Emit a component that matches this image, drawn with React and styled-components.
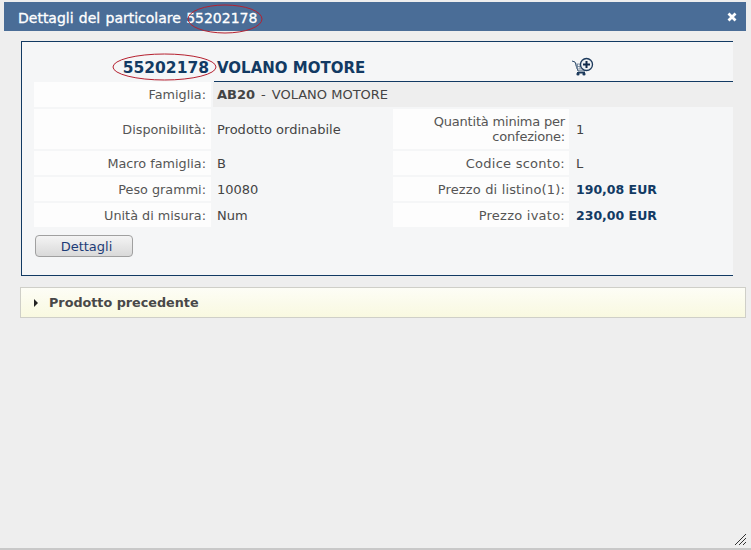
import React from "react";
import styled, { createGlobalStyle } from "styled-components";

const Global = createGlobalStyle`
  html, body { margin: 0; padding: 0; background: #ececec; }
  body { font-family: "DejaVu Sans", Verdana, sans-serif; }
`;

const Page = styled.div`
  position: relative;
  width: 751px;
  height: 550px;
  overflow: hidden;
  box-sizing: border-box;
  padding: 2px 5px 3px 4px;
  background: #eeeeee;
  border-bottom: 2px solid #c8c8c8;
`;
const TitleBar = styled.div`
  height: 29px;
  display: flex;
  align-items: center;
  justify-content: space-between;
  padding: 0 9px 0 14px;
  background: #4a6d97;
  color: #fff;
  font-size: 14px;
`;
const TitleText = styled.span`
  font-weight: 400;
  word-spacing: 0.8px;
  -webkit-text-stroke: 0.3px #fff;
  margin-top: 2px;
`;
const Body = styled.div`
  padding: 10px 0 0 17px;
  display: flex;
  flex-direction: column;
`;
const Card = styled.div`
  width: 712px;
  height: 235px;
  box-sizing: border-box;
  border: 1px solid #123a63;
  border-right: 0;
  background: #f5f6f7;
  padding: 11px 0 0 12px;
`;
const Heading = styled.div`
  display: grid;
  grid-template-columns: 180px 1fr;
  height: 29px;
  box-sizing: border-box;
`;
const Code = styled.div`
  font-size: 15.5px;
  font-weight: bold;
  color: #123a63;
  text-align: right;
  line-height: 31px;
  padding-right: 5px;
`;
const NameLine = styled.div`
  display: flex;
  align-items: center;
  border-bottom: 1px solid #123a63;
  padding-left: 3px;
  height: 29px;
  box-sizing: border-box;
`;
const Name = styled.span`
  font-size: 15px;
  font-weight: bold;
  color: #123a63;
  width: 354px;
  line-height: 1;
  margin-top: 3px;
`;
const Grid = styled.div`
  display: grid;
  grid-template-columns: 177px 178px 176px 162px;
  column-gap: 2px;
  row-gap: 2px;
  font-size: 13px;
  color: #555;
`;
const Label = styled.div`
  background: #fdfdfd;
  text-align: right;
  padding-right: ${p => p.$end || 5}px;
  height: ${p => p.$h}px;
  display: flex;
  align-items: center;
  justify-content: flex-end;
  box-sizing: border-box;
  line-height: 15px;
  font-size: ${p => p.$size || 12.8}px;
  letter-spacing: ${p => p.$track || 0}px;
`;
const Value = styled.div`
  display: flex;
  align-items: center;
  padding-left: ${p => p.$pad || 4}px;
  height: ${p => p.$h}px;
  box-sizing: border-box;
  color: #444;
  ${p => p.$wide && "grid-column: span 3; background: #eeeeee;"}
  ${p => p.$price && "font-size: 12.5px; font-weight: bold; color: #123a63;"}
`;
const Strong = styled.b`
  margin-right: 6px;
`;
const Spaced = styled.span`
  margin-left: 6px;
`;
const Button = styled.button`
  display: block;
  width: 98px;
  height: 22px;
  margin: 8px 0 0 1px;
  padding: 0 0 0 5px;
  border: 1px solid #a0a0a0;
  border-radius: 4px;
  background: linear-gradient(#f4f4f4, #d9d9d9);
  color: #1d3c77;
  font-family: inherit;
  font-size: 13px;
`;
const Accordion = styled.div`
  margin: 11px 0 0 -1px;
  width: 726px;
  height: 31px;
  box-sizing: border-box;
  border: 1px solid #cfcfc8;
  background: linear-gradient(#fdfdf6, #f9f9e0);
  display: flex;
  align-items: center;
  padding-left: 13px;
  gap: 11px;
  color: #484848;
  font-size: 12.75px;
  font-weight: bold;
`;
const Arrow = styled.span`
  width: 0;
  height: 0;
  border-left: 4px solid #222;
  border-top: 4px solid transparent;
  border-bottom: 4px solid transparent;
`;
const Ring = styled.svg`
  position: absolute;
  left: ${p => p.$x}px;
  top: ${p => p.$y}px;
  pointer-events: none;
`;
const Grip = styled.svg`
  position: absolute;
  right: 4px;
  bottom: 2px;
`;
const Close = styled.svg`
  display: block;
`;
const Cart = styled.svg`
  display: block;
`;

const Ellipse = ({ x, y, w, h }) => (
  <Ring $x={x} $y={y} width={w} height={h} viewBox={`0 0 ${w} ${h}`}>
    <ellipse cx={w / 2} cy={h / 2} rx={w / 2 - 1} ry={h / 2 - 1} fill="none" stroke="#b5202f" strokeWidth="1" />
  </Ring>
);

const rows = [
  { a: "Disponibilità:", b: "Prodotto ordinabile", c: ["Quantità minima per", "confezione:"], d: "1", h: 40, track: -0.2 },
  { a: "Macro famiglia:", b: "B", c: ["Codice sconto:"], d: "L", h: 24, track: 0.25 },
  { a: "Peso grammi:", b: "10080", c: ["Prezzo di listino(1):"], d: "190,08 EUR", h: 24, price: true, track: 0.15 },
  { a: "Unità di misura:", b: "Num", c: ["Prezzo ivato:"], d: "230,00 EUR", h: 24, price: true, track: 0.25 },
];

export default function App() {
  return (
    <Page>
      <Global />
      <TitleBar>
        <TitleText>Dettagli del particolare 55202178</TitleText>
        <Close width="10" height="10" viewBox="0 0 10 10">
          <path d="M1.5 1.5 L8.5 8.5 M8.5 1.5 L1.5 8.5" stroke="#fff" strokeWidth="2.8" />
        </Close>
      </TitleBar>
      <Body>
        <Card>
          <Heading>
            <Code>55202178</Code>
            <NameLine>
              <Name>VOLANO MOTORE</Name>
              <Cart width="24" height="20" viewBox="0 0 24 20">
                <path d="M1 4 L4 5 L7 14 L14 14" fill="none" stroke="#2c4a6a" strokeWidth="1" />
                <path d="M4.5 7 H12 V12 H6 Z M6.5 7 V12 M9 7 V12 M5 9.5 H12" fill="none" stroke="#6a7f96" strokeWidth="0.8" />
                <rect x="6" y="15" width="8" height="1.5" fill="#1d3a5c" />
                <circle cx="7" cy="17" r="1.6" fill="#1d3a5c" />
                <circle cx="13" cy="17" r="1.6" fill="#1d3a5c" />
                <circle cx="15.5" cy="7.5" r="6" fill="#eef1f4" stroke="#1d3a5c" strokeWidth="1.3" />
                <path d="M15.5 4 V11 M12 7.5 H19" stroke="#10294a" strokeWidth="2" />
              </Cart>
            </NameLine>
          </Heading>
          <Grid>
            <Label $h={25}>Famiglia:</Label>
            <Value $wide $h={25}>
              <Strong>AB20</Strong> - <Spaced>VOLANO MOTORE</Spaced>
            </Value>
            {rows.map(({ a, b, c, d, h, price, track }) => (
              <React.Fragment key={a}>
                <Label $h={h}>{a}</Label>
                <Value $h={h}>{b}</Value>
                <Label $h={h} $end={4} $size={13} $track={track}>
                  <span>
                    {c.map((line, i) => (
                      <React.Fragment key={line}>
                        {i > 0 && <br />}
                        {line}
                      </React.Fragment>
                    ))}
                  </span>
                </Label>
                <Value $h={h} $price={price} $pad={5}>{d}</Value>
              </React.Fragment>
            ))}
          </Grid>
          <Button>Dettagli</Button>
        </Card>
        <Accordion>
          <Arrow />
          Prodotto precedente
        </Accordion>
      </Body>
      <Ellipse x={187} y={4} w={76} h={30} />
      <Ellipse x={112} y={53} w={105} h={28} />
      <Grip width="13" height="13" viewBox="0 0 13 13">
        <path d="M1 12 L12 1 M5 12 L12 5 M9 12 L12 9" stroke="#333" strokeWidth="1" />
      </Grip>
    </Page>
  );
}
